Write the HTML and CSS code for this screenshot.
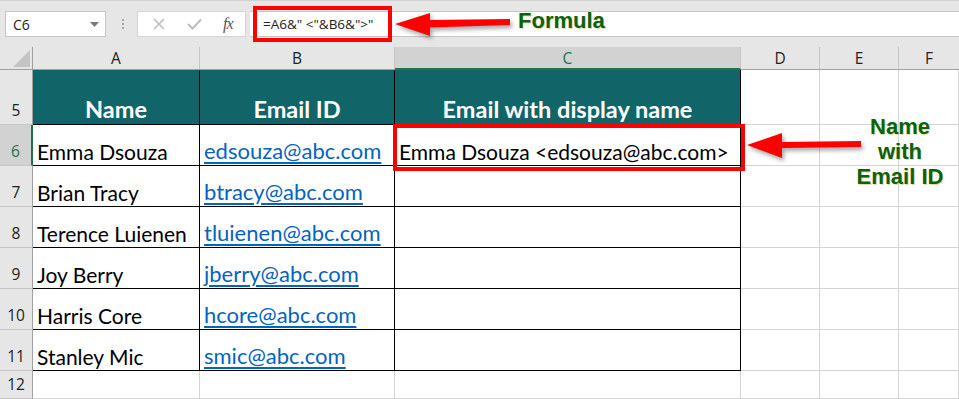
FILE: index.html
```html
<!DOCTYPE html>
<html>
<head>
<meta charset="utf-8">
<link rel="stylesheet" href="styles.css">
</head>
<body>
<div class="app">
  <div class="toolbar">
    <div class="namebox"><span>C6</span><svg class="caret" width="9" height="5" viewBox="0 0 9 5"><polygon points="0,0 9,0 4.5,5" fill="#7a7a7a"/></svg></div>
    <div class="grip"><i></i><i></i><i></i></div>
    <div class="fxbox">
      <svg width="14" height="12" viewBox="0 0 14 12"><path d="M2 1 L12 11 M12 1 L2 11" stroke="#bdbdbd" stroke-width="1.6" fill="none"/></svg>
      <svg width="15" height="12" viewBox="0 0 15 12"><path d="M1 6 L5.5 10.5 L14 1.5" stroke="#bdbdbd" stroke-width="2" fill="none"/></svg>
      <span class="fx">fx</span>
    </div>
    <div class="formula"><span>=A6&amp;" &lt;"&amp;B6&amp;"&gt;"</span></div>
  </div>

  <div class="sheet">
    <div class="ch corner"><svg width="17" height="17" viewBox="0 0 17 17"><polygon points="17,0 17,17 0,17" fill="#c4c4c4"/></svg></div>
    <div class="ch">A</div>
    <div class="ch">B</div>
    <div class="ch sel">C</div>
    <div class="ch">D</div>
    <div class="ch">E</div>
    <div class="ch last">F</div>

    <div class="rh">5</div>
    <div class="th">Name</div>
    <div class="th">Email ID</div>
    <div class="th">Email with display name</div>
    <div class="c"></div><div class="c"></div><div class="c"></div>

    <div class="rh sel">6</div>
    <div class="td">Emma Dsouza</div>
    <div class="td"><span class="link">edsouza@abc.com</span></div>
    <div class="td">Emma Dsouza &lt;edsouza@abc.com&gt;</div>
    <div class="c"></div><div class="c"></div><div class="c"></div>

    <div class="rh">7</div>
    <div class="td">Brian Tracy</div>
    <div class="td"><span class="link">btracy@abc.com</span></div>
    <div class="td"></div>
    <div class="c"></div><div class="c"></div><div class="c"></div>

    <div class="rh">8</div>
    <div class="td">Terence Luienen</div>
    <div class="td"><span class="link">tluienen@abc.com</span></div>
    <div class="td"></div>
    <div class="c"></div><div class="c"></div><div class="c"></div>

    <div class="rh">9</div>
    <div class="td">Joy Berry</div>
    <div class="td"><span class="link">jberry@abc.com</span></div>
    <div class="td"></div>
    <div class="c"></div><div class="c"></div><div class="c"></div>

    <div class="rh">10</div>
    <div class="td">Harris Core</div>
    <div class="td"><span class="link">hcore@abc.com</span></div>
    <div class="td"></div>
    <div class="c"></div><div class="c"></div><div class="c"></div>

    <div class="rh">11</div>
    <div class="td">Stanley Mic</div>
    <div class="td"><span class="link">smic@abc.com</span></div>
    <div class="td"></div>
    <div class="c"></div><div class="c"></div><div class="c"></div>

    <div class="rh">12</div>
    <div class="c"></div><div class="c"></div><div class="c"></div>
    <div class="c"></div><div class="c"></div><div class="c"></div>
  </div>

  <div class="redbox box-formula"></div>
  <div class="redbox box-cell"></div>
  <svg class="arrow arrow-formula" width="122" height="32" viewBox="0 0 122 32"><polygon points="2,14 37,3 37,10 117,9 117,15 37,17.5 37,26" fill="#ff0000"/></svg>
  <svg class="arrow arrow-cell" width="125" height="36" viewBox="0 0 125 36"><polygon points="2,17 37,5 37,14 116,13 116,19 37,20 37,30" fill="#ff0000"/></svg>
  <div class="note note-formula">Formula</div>
  <div class="note note-cell">Name<br>with<br>Email ID</div>
</div>
</body>
</html>
```

FILE: styles.css
```css
* { box-sizing: border-box; }
body { margin: 0; background: #fff; font-family: "Lato", sans-serif; }
.app { position: relative; width: 959px; height: 399px; overflow: hidden; }

.toolbar {
  height: 47px;
  background: #e6e6e6;
  border-top: 1px solid #d2d2d2;
  display: flex;
  align-items: flex-start;
  padding: 10px 0 0 5px;
  font-family: "Open Sans", sans-serif;
  font-size: 13.5px;
  color: #222;
}
.namebox {
  width: 101px; height: 26px;
  background: #fff;
  border: 1px solid #c6c6c6;
  display: flex; align-items: center;
  padding: 0 6px 0 7px;
  font-size: 14px;
}
.namebox .caret { margin-left: auto; }
.grip {
  width: 31px; height: 26px;
  display: flex; flex-direction: column; align-items: center; justify-content: center; gap: 2px;
  padding-left: 2px;
}
.grip i { display: block; width: 2px; height: 2px; background: #a8a8a8; }
.fxbox {
  width: 109px; height: 26px;
  background: #fff;
  border: 1px solid #d4d4d4;
  display: flex; align-items: center; justify-content: space-around;
  padding: 0 2px 0 4px;
}
.fx { font-family: "Liberation Serif", serif; font-style: italic; font-size: 16px; color: #555; letter-spacing: -1px; }
.formula {
  flex: 1; height: 26px; margin-left: 4px;
  background: #fff;
  border-top: 1px solid #c6c6c6; border-bottom: 1px solid #c6c6c6;
  display: flex; align-items: center;
  padding-left: 13px;
}

.sheet {
  display: grid;
  grid-template-columns: 33px 167px 195px 346px 79px 79px 1fr;
  grid-template-rows: 23px 55px repeat(6, 41px) 1fr;
  height: 352px;
}
.sheet > div { border-right: 1px solid #d4d4d4; border-bottom: 1px solid #d4d4d4; }

.ch {
  background: #e6e6e6;
  font-family: "Open Sans", sans-serif; font-size: 15.5px; color: #222;
  display: flex; align-items: center; justify-content: center;
  border-right-color: #c6c6c6 !important;
  border-bottom-color: #a0a0a0 !important;
}
.ch.corner { justify-content: flex-end; align-items: flex-end; padding: 0 2px 2px 0; border-right-color: #a0a0a0 !important; }
.ch.sel { background: #d2d2d2; color: #217346; border-bottom: 2px solid #217346 !important; }
.ch.last { border-right: none !important; }

.rh {
  background: #e6e6e6;
  font-family: "Open Sans", sans-serif; font-size: 15.5px; color: #222;
  display: flex; align-items: flex-end; justify-content: center;
  padding-bottom: 3px;
  border-bottom-color: #c6c6c6 !important;
  border-right-color: #a0a0a0 !important;
}
.rh.sel { background: #d2d2d2; color: #217346; border-right: 2px solid #217346 !important; }

.th {
  background: #116468;
  color: #fff; font-weight: 700; font-size: 23.5px; line-height: 1.2;
  display: flex; align-items: flex-end; justify-content: center;
  padding-bottom: 1px;
  border-color: #000 !important;
}
.td {
  font-size: 21px; color: #000; line-height: 1.2;
  display: flex; align-items: flex-end;
  padding: 0 0 1px 4px;
  white-space: nowrap;
  border-color: #000 !important;
}
.link { color: #0563c1; font-size: 22px; text-decoration: underline; text-underline-offset: 3px; }

.redbox { position: absolute; border: 4px solid #ff0000; }
.box-formula { left: 253px; top: 6px; width: 139px; height: 36px; }
.box-cell { left: 393px; top: 124px; width: 352px; height: 47px; }

.arrow { position: absolute; filter: drop-shadow(2px 3px 2px rgba(0,0,0,0.35)); }
.arrow-formula { left: 393px; top: 10px; }
.arrow-cell { left: 745px; top: 128px; }

.note {
  position: absolute;
  font-family: "Liberation Sans", Arial, sans-serif; font-weight: 700;
  color: #0b620b;
  text-shadow: 1px 1px 0 rgba(200,170,60,0.45);
}
.note-formula { left: 518px; top: 7px; font-size: 22px; line-height: 28px; }
.note-cell { left: 840px; top: 114px; width: 120px; text-align: center; font-size: 22px; line-height: 25px; }
```
